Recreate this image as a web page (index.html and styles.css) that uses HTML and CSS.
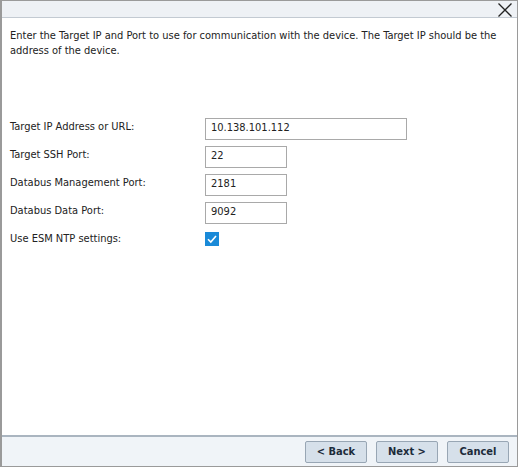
FILE: index.html
```html
<!DOCTYPE html>
<html>
<head>
<meta charset="utf-8">
<link rel="stylesheet" href="styles.css">
</head>
<body>
<div class="dialog">
  <div class="titlebar">
    <svg class="close" width="16" height="14" viewBox="0 0 16 14"><path d="M1.5 0.5 L14.5 13.5 M14.5 0.5 L1.5 13.5" stroke="#222" stroke-width="1.3" fill="none"/></svg>
  </div>
  <div class="content">
    <p class="desc">Enter the Target IP and Port to use for communication with the device. The Target IP should be the address of the device.</p>
    <div class="form">
      <div class="row"><label>Target IP Address or URL:</label><input class="wide" type="text" value="10.138.101.112"></div>
      <div class="row"><label>Target SSH Port:</label><input class="short" type="text" value="22"></div>
      <div class="row"><label>Databus Management Port:</label><input class="short" type="text" value="2181"></div>
      <div class="row"><label>Databus Data Port:</label><input class="short" type="text" value="9092"></div>
      <div class="row"><label>Use ESM NTP settings:</label><span class="check"><svg width="14" height="14" viewBox="0 0 14 14"><path d="M3 7.2 L5.8 10 L11 4" stroke="#fff" stroke-width="1.6" fill="none"/></svg></span></div>
    </div>
  </div>
  <div class="footer">
    <button class="btn">&lt; Back</button>
    <button class="btn">Next &gt;</button>
    <button class="btn">Cancel</button>
  </div>
</div>
</body>
</html>
```
FILE: styles.css
```css
html, body { margin: 0; padding: 0; background: #fff; }
body { font-family: "DejaVu Sans Condensed", "DejaVu Sans", Verdana, sans-serif; font-stretch: condensed; font-size: 11px; color: #222; }
.dialog {
  width: 518px; height: 467px; box-sizing: border-box;
  border: 1px solid #9a9a9a; border-left-width: 2px;
  display: flex; flex-direction: column;
}
.titlebar {
  height: 16px; background: #eef1f5; border-bottom: 1px solid #c3cad2;
  display: flex; justify-content: flex-end; align-items: center; padding-right: 4px;
}
.close { display: block; margin-top: 1px; }
.content { flex: 1; padding: 0 8px; }
.desc { margin: 10px 0 0; line-height: 15px; width: 495px; }
.form { margin-top: 60px; display: flex; flex-direction: column; gap: 6px; }
.row { display: flex; align-items: flex-start; height: 22px; }
.row label { width: 195px; flex: none; line-height: 17px; }
input {
  font: inherit; color: #222; height: 22px; box-sizing: border-box;
  border: 1px solid #a9a9a9; padding: 0 5px 3px; margin: 0; background: #fff; outline: none;
}
.wide { width: 202px; }
.short { width: 82px; }
.check {
  width: 14px; height: 14px; background: #1a8ad8; display: block; margin-top: 2px;
}
.check svg { display: block; }
.footer {
  height: 29px; border-top: 2px solid #aab5c0; background: #f0f4f8;
  display: flex; justify-content: flex-end; align-items: center; gap: 9px; padding-right: 8px;
}
.btn {
  width: 62px; height: 22px; box-sizing: border-box; margin: 0;
  font-family: "DejaVu Sans Condensed", "DejaVu Sans", Verdana, sans-serif; font-stretch: condensed; font-size: 11px; font-weight: bold; color: #1c2b3a;
  background: #d6e0ea; border: 1px solid #98a6b4; border-radius: 2px; padding: 0;
}
```
